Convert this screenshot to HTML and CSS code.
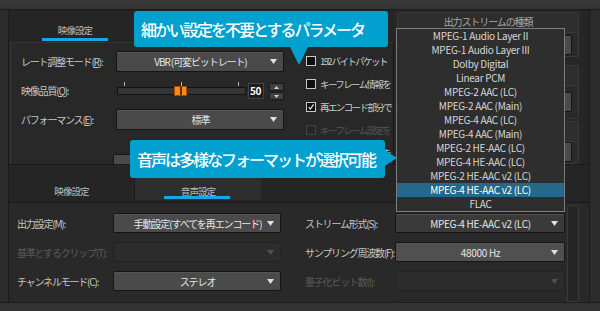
FILE: index.html
```html
<!DOCTYPE html>
<html lang="ja">
<head>
<meta charset="utf-8">
<title>設定</title>
<link rel="stylesheet" href="styles.css">
</head>
<body>
<div class="screen">
  <div class="band"></div>
  <div class="main">
    <div class="upper">
      <div class="upper-left">
        <div class="tabs tabs-top">
          <div class="tab active">映像設定</div>
        </div>
        <div class="panel">
          <div class="form">
            <div class="row">
              <span class="lbl">レート調整モード(<u>R</u>):</span>
              <div class="select"><span class="val">VBR (可変ビットレート)</span><svg class="arrow" viewBox="0 0 7 5"><path d="M0 0h7L3.5 5z"/></svg></div>
            </div>
            <div class="row">
              <span class="lbl">映像品質(<u>Q</u>):</span>
              <div class="quality">
                <div class="slider">
                  <div class="ticks"><i></i><i></i><i></i></div>
                  <div class="track"><div class="thumb"></div></div>
                </div>
                <div class="num">50</div>
                <div class="spin">
                  <div class="spin-btn"><svg viewBox="0 0 5 3"><path d="M0 3h5L2.5 0z"/></svg></div>
                  <div class="spin-btn"><svg viewBox="0 0 5 3"><path d="M0 0h5L2.5 3z"/></svg></div>
                </div>
              </div>
            </div>
            <div class="row">
              <span class="lbl">パフォーマンス(<u>E</u>):</span>
              <div class="select"><span class="val">標準</span><svg class="arrow" viewBox="0 0 7 5"><path d="M0 0h7L3.5 5z"/></svg></div>
            </div>
            <div class="more-btn"></div>
          </div>
          <div class="checks">
            <div class="check"><span class="box"></span><span class="ctext">192 バイトパケット</span></div>
            <div class="check"><span class="box"></span><span class="ctext">キーフレーム情報を</span></div>
            <div class="check"><span class="box"><svg viewBox="0 0 10 10"><path d="M2 5l2.2 2.5L8.2 1.8" /></svg></span><span class="ctext">再エンコード部分で</span></div>
            <div class="check disabled"><span class="box"></span><span class="ctext">キーフレーム設定を</span></div>
            <div class="check"><span class="box"></span><span class="ctext">キーフレーム間隔を</span></div>
          </div>
        </div>
      </div>
      <div class="stream-col">
        <div class="group">
          <div class="group-head">出力ストリームの種類</div>
          <div class="group-body"><div class="select small"><span class="val"></span><svg class="arrow" viewBox="0 0 7 5"><path d="M0 0h7L3.5 5z"/></svg></div></div>
        </div>
        <div class="group g2">
          <div class="group-head"></div>
          <div class="group-body"><div class="select small"><span class="val"></span><svg class="arrow" viewBox="0 0 7 5"><path d="M0 0h7L3.5 5z"/></svg></div></div>
        </div>
        <div class="group g3">
          <div class="group-head"></div>
          <div class="group-body"><div class="select small"><span class="val"></span><svg class="arrow" viewBox="0 0 7 5"><path d="M0 0h7L3.5 5z"/></svg></div></div>
        </div>
      </div>
    </div>

    <div class="lower">
      <div class="tabs tabs-bottom">
        <div class="tab">映像設定</div>
        <div class="tab active">音声設定</div>
      </div>
      <div class="panel2">
        <div class="grid">
          <span class="lbl">出力設定(M):</span>
          <div class="select"><span class="val">手動設定(すべてを再エンコード)</span><svg class="arrow" viewBox="0 0 7 5"><path d="M0 0h7L3.5 5z"/></svg></div>
          <span></span>
          <span class="lbl">ストリーム形式(S):</span>
          <div class="select dark"><span class="val latin">MPEG-4 HE-AAC v2 (LC)</span><svg class="arrow" viewBox="0 0 7 5"><path d="M0 0h7L3.5 5z"/></svg></div>

          <span class="lbl off">基準とするクリップ(T):</span>
          <div class="select off"><span class="val"></span><svg class="arrow" viewBox="0 0 7 5"><path d="M0 0h7L3.5 5z"/></svg></div>
          <span></span>
          <span class="lbl">サンプリング周波数(F):</span>
          <div class="select light"><span class="val latin">48000 Hz</span><svg class="arrow" viewBox="0 0 7 5"><path d="M0 0h7L3.5 5z"/></svg></div>

          <span class="lbl">チャンネルモード(C):</span>
          <div class="select"><span class="val">ステレオ</span><svg class="arrow" viewBox="0 0 7 5"><path d="M0 0h7L3.5 5z"/></svg></div>
          <span></span>
          <span class="lbl off">量子化ビット数(I):</span>
          <div class="select off"><span class="val"></span><svg class="arrow" viewBox="0 0 7 5"><path d="M0 0h7L3.5 5z"/></svg></div>

          <span></span><span></span><span></span><span></span>
          <div class="select off"><span class="val"></span></div>
        </div>
        <div class="scroll"></div>
      </div>
    </div>
  </div>
  <div class="band band-bottom"></div>

  <div class="callout callout-down">細かい設定を不要とするパラメータ</div>
  <div class="callout callout-right">音声は多様なフォーマットが選択可能</div>

  <ul class="popup">
    <li>MPEG-1 Audio Layer II</li>
    <li>MPEG-1 Audio Layer III</li>
    <li>Dolby Digital</li>
    <li>Linear PCM</li>
    <li>MPEG-2 AAC (LC)</li>
    <li>MPEG-2 AAC (Main)</li>
    <li>MPEG-4 AAC (LC)</li>
    <li>MPEG-4 AAC (Main)</li>
    <li>MPEG-2 HE-AAC (LC)</li>
    <li>MPEG-4 HE-AAC (LC)</li>
    <li>MPEG-2 HE-AAC v2 (LC)</li>
    <li class="sel">MPEG-4 HE-AAC v2 (LC)</li>
    <li>FLAC</li>
  </ul>
</div>
</body>
</html>
```

FILE: styles.css
```css
* { box-sizing: border-box; }
html, body { margin: 0; padding: 0; background: #2c2c2c; }
body {
  font-family: "Noto Sans CJK JP", "Noto Sans", sans-serif;
  font-size: 10px;
  color: #cfcfcf;
}
.screen {
  width: 600px;
  height: 311px;
  position: relative;
  overflow: hidden;
  background: #2c2c2c;
  display: flex;
  flex-direction: column;
}
.band { height: 10px; background: linear-gradient(#3a3a3a, #333333); border-bottom: 1px solid #1b1b1b; flex: none; }
.band-bottom { height: 9px; border-bottom: 0; border-top: 1px solid #1b1b1b; background: #333333; }
.main {
  flex: 1;
  margin: 0 10px 0 8px;
  background: #252525;
  border-left: 1px solid #1b1b1b;
  border-right: 1px solid #1b1b1b;
  display: flex;
  flex-direction: column;
  min-height: 0;
}

/* upper */
.upper { height: 155px; display: flex; border-bottom: 1px solid #1a1a1a; flex: none; }
.upper-left { width: 385px; display: flex; flex-direction: column; }
.tabs { display: flex; }
.tabs-top { height: 32px; }
.tab {
  width: 124px;
  text-align: center;
  font-size: 9.5px;
  letter-spacing: -0.9px;
  color: #bdbdbd;
  position: relative;
}
.tabs-top .tab { margin-left: 4px; padding-top: 13px; }
.tab.active::after {
  content: "";
  position: absolute;
  left: 29px;
  width: 66px;
  bottom: 1px;
  height: 3px;
  background: #1aa6e6;
}
.panel {
  flex: 1;
  margin-left: 1px;
  border-top: 1px solid #333;
  border-left: 1px solid #3a3a3a;
  border-right: 1px solid #181818;
  background: #282828;
  display: flex;
}
.form { width: 273px; padding: 8px 0 0 10px; display: flex; flex-direction: column; gap: 8px; }
.row { display: flex; align-items: center; height: 21px; }
.lbl {
  width: 95px;
  flex: none;
  color: #c6c6c6;
  letter-spacing: -1.2px;
  white-space: nowrap;
}
.lbl u { text-decoration-thickness: 1px; text-underline-offset: 1px; }
.lbl.off { color: #5a5a5a; }
.select {
  width: 168px;
  height: 21px;
  flex: none;
  background: #4a4a4a;
  border: 1px solid #151515;
  border-radius: 2px;
  box-shadow: inset 0 1px 0 #555;
  display: flex;
  align-items: center;
  padding: 0 6px 0 14px;
  color: #e6e6e6;
}
.select .val { flex: 1; text-align: center; letter-spacing: -1.1px; white-space: nowrap; }
.select .val.latin { letter-spacing: -0.3px; }
.arrow { width: 7px; height: 5px; fill: #e0e0e0; flex: none; }
.select.off { background: #2c2c2c; border-color: #232323; box-shadow: none; }
.select.off .arrow { fill: #505050; }
.select.dark { background: #3a3a3a; }
.select.light { background: #505050; }

.quality { display: flex; align-items: flex-start; height: 21px; padding-top: 2px; }
.slider { width: 129px; margin-left: 1px; display: flex; flex-direction: column; }
.ticks { height: 5px; display: flex; justify-content: space-between; padding: 0 7px; }
.ticks i { width: 1px; height: 4px; background: #b0b0b0; }
.track {
  height: 8px;
  background: #353535;
  border: 1px solid #141414;
  display: flex;
  align-items: center;
}
.thumb {
  width: 13px;
  height: 10px;
  margin-left: 56px;
  background: linear-gradient(90deg, #ff8a10 0 5px, #5a2a00 5px 7px, #ff8a10 7px);
  border: 1px solid #a04a00;
}
.num {
  width: 16px;
  height: 16px;
  margin: 1px 0 0 2px;
  background: #1c1c1c;
  border: 1px solid #444;
  color: #fff;
  font-weight: 700;
  font-size: 10px;
  line-height: 14px;
  letter-spacing: -0.3px;
  padding-left: 1px;
}
.spin { width: 15px; margin: 1px 0 0 5px; display: flex; flex-direction: column; gap: 1px; }
.spin-btn {
  height: 8px;
  background: #414141;
  border: 1px solid #1a1a1a;
  border-radius: 1px;
  display: flex;
  align-items: center;
  justify-content: center;
}
.spin-btn svg { width: 5px; height: 3px; fill: #cfcfcf; }
.more-btn {
  width: 122px;
  height: 10px;
  margin: 16px 0 0 92px;
  background: #4a4a4a;
  border: 1px solid #151515;
  border-bottom: 0;
  border-radius: 2px 2px 0 0;
}

.checks { width: 109px; padding: 6px 0 0 22px; overflow: hidden; }
.check { height: 23px; display: flex; align-items: center; gap: 4px; white-space: nowrap; }
.box {
  width: 10px;
  height: 10px;
  flex: none;
  border: 1px solid #c8c8c8;
  background: #101010;
  display: flex;
}
.box svg { width: 8px; height: 8px; fill: none; stroke: #f0f0f0; stroke-width: 1.4; }
.ctext { font-size: 9.5px; letter-spacing: -1.6px; color: #cacaca; }
.check.disabled .box { border-color: #444; background: #262626; }
.check.disabled .ctext { color: #555; }

.stream-col { flex: 1; padding: 2px 10px 0 3px; display: flex; flex-direction: column; background: #262626; }
.group {
  height: 46px;
  background: #2a2a2a;
  border: 1px solid #3a3a3a;
  border-radius: 2px;
  display: flex;
  flex-direction: column;
}
.g2 { margin-top: 8px; height: 54px; }
.g3 { margin-top: 2px; height: 44px; }
.group-head {
  height: 20px;
  border-bottom: 1px solid #3a3a3a;
  text-align: center;
  line-height: 15px;
  padding-top: 1px;
  color: #a8a8a8;
  letter-spacing: -1.1px;
  background: #2e2e2e;
}
.group-body { flex: 1; display: flex; align-items: center; justify-content: flex-end; padding-right: 6px; }
.select.small { width: 160px; height: 20px; }

/* lower */
.lower { flex: 1; display: flex; flex-direction: column; min-height: 0; }
.tabs-bottom { height: 37px; padding-top: 5px; flex: none; }
.tabs-bottom .tab { padding-top: 14px; height: 30px; }
.tabs-bottom .tab:first-child { width: 126px; border-right: 1px solid #1a1a1a; }
.tabs-bottom .tab.active { width: 126px; background: #2e2e2e; }
.panel2 {
  flex: 1;
  background: #292929;
  border-top: 1px solid #1a1a1a;
  display: flex;
  overflow: hidden;
  min-height: 0;
}
.grid {
  display: grid;
  grid-template-columns: 96px 168px 24px 90px 170px;
  grid-auto-rows: 20px;
  row-gap: 9px;
  align-items: center;
  padding: 10px 0 0 8px;
}
.grid .select { width: auto; height: 20px; }
.scroll {
  width: 12px;
  margin: 2px 0 0 2px;
  border: 1px solid #3a3a3a;
  border-radius: 3px 3px 0 0;
  background: #262626;
}

/* overlays */
.callout {
  position: absolute;
  background: #02a0cf;
  color: #fff;
  font-size: 16px;
  font-weight: 500;
  letter-spacing: -2px;
  white-space: nowrap;
  border-radius: 3px;
  display: flex;
  align-items: center;
  padding-left: 7px;
}
.callout-down { left: 134px; top: 11px; width: 254px; height: 36px; }
.callout-down::after {
  content: "";
  position: absolute;
  left: 156px;
  top: 36px;
  border-left: 9px solid transparent;
  border-right: 9px solid transparent;
  border-top: 18px solid #02a0cf;
}
.callout-right { left: 130px; top: 140px; width: 255px; height: 38px; }
.callout-right::after {
  content: "";
  position: absolute;
  left: 255px;
  top: 10px;
  border-top: 8px solid transparent;
  border-bottom: 8px solid transparent;
  border-left: 12px solid #02a0cf;
}
.popup {
  position: absolute;
  left: 396px;
  top: 28px;
  width: 169px;
  margin: 0;
  padding: 0;
  list-style: none;
  background: #2e2e2e;
  border: 1px solid #7c7c7c;
}
.popup li {
  height: 14px;
  line-height: 14px;
  text-align: center;
  color: #d6d6d6;
  letter-spacing: -0.3px;
  white-space: nowrap;
}
.popup li.sel { background: #23698a; color: #fff; }
```
